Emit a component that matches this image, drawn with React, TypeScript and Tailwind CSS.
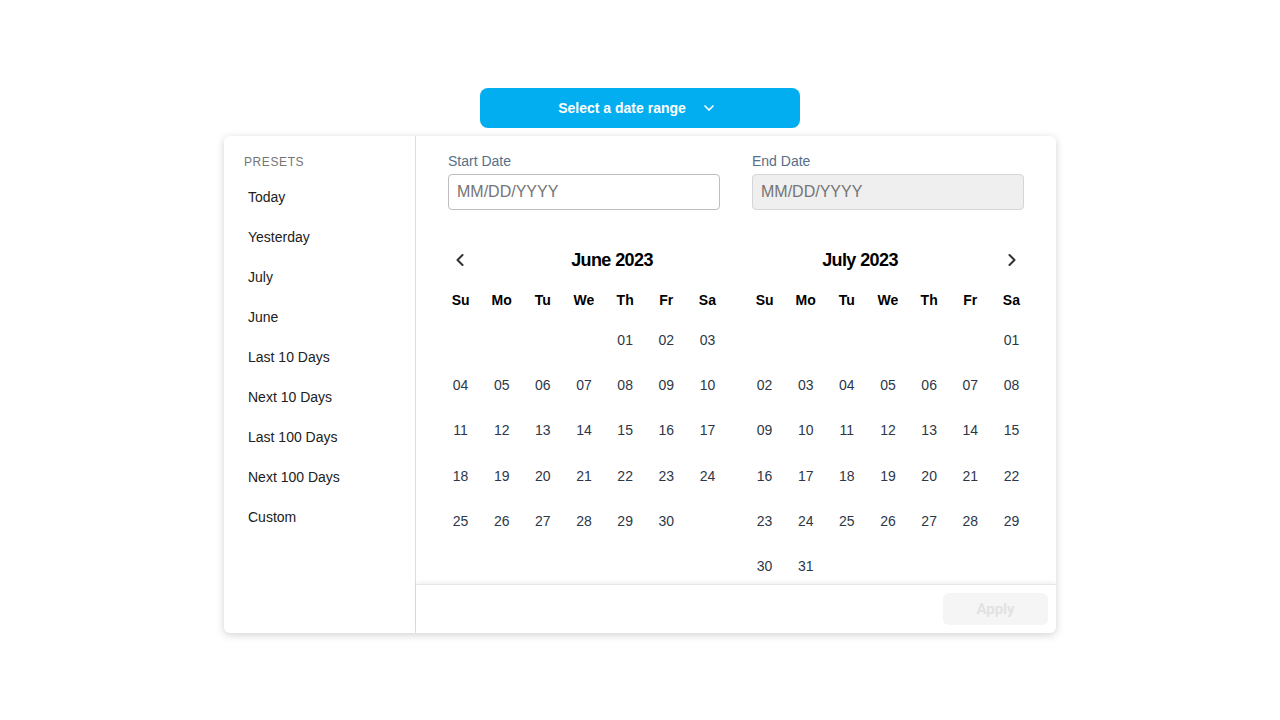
import { ChevronDown, ChevronLeft, ChevronRight } from 'lucide-react';

const presets = [
  'Today',
  'Yesterday',
  'July',
  'June',
  'Last 10 Days',
  'Next 10 Days',
  'Last 100 Days',
  'Next 100 Days',
  'Custom',
];

const dayNames = ['Su', 'Mo', 'Tu', 'We', 'Th', 'Fr', 'Sa'];

const buildWeeks = (offset: number, days: number) => {
  const cells: (number | null)[] = [];
  for (let i = 0; i < offset; i++) cells.push(null);
  for (let d = 1; d <= days; d++) cells.push(d);
  while (cells.length % 7 !== 0) cells.push(null);
  const weeks: (number | null)[][] = [];
  for (let i = 0; i < cells.length; i += 7) weeks.push(cells.slice(i, i + 7));
  return weeks;
};

const Month = ({
  title,
  offset,
  days,
  side,
}: {
  title: string;
  offset: number;
  days: number;
  side: 'left' | 'right';
}) => {
  const weeks = buildWeeks(offset, days);
  return (
    <div className="w-[288px]">
      <div className="flex h-10 items-center">
        {side === 'left' && (
          <button className="flex h-10 w-10 items-center justify-center text-[#333]">
            <ChevronLeft className="h-5 w-5" strokeWidth={2.5} />
          </button>
        )}
        <div
          className={
            side === 'left'
              ? 'flex-1 pl-4 text-center text-[18px] font-bold tracking-[-0.6px] text-black'
              : 'flex-1 pr-4 text-center text-[18px] font-bold tracking-[-0.6px] text-black'
          }
        >
          {title}
        </div>
        {side === 'right' && (
          <button className="flex h-10 w-10 items-center justify-center text-[#333]">
            <ChevronRight className="h-5 w-5" strokeWidth={2.5} />
          </button>
        )}
      </div>
      <div className="grid h-[38px] grid-cols-7 items-center pt-[2px]">
        {dayNames.map((d) => (
          <div key={d} className="text-center text-[14px] font-bold text-black">
            {d}
          </div>
        ))}
      </div>
      {weeks.map((week, wi) => (
        <div key={wi} className="grid h-[45.2px] grid-cols-7 items-center">
          {week.map((day, di) => (
            <div key={di} className="text-center text-[14px] text-[#2d3748]">
              {day ? String(day).padStart(2, '0') : ''}
            </div>
          ))}
        </div>
      ))}
    </div>
  );
};

export default function App() {
  return (
    <div className="min-h-screen bg-white font-['Liberation_Sans',Arial,sans-serif]">
      <div className="flex flex-col items-center pt-[88px]">
        <button className="flex h-10 w-[320px] items-center justify-center gap-[15px] rounded-lg bg-[#03aef0] pr-[5px] text-[14px] font-bold text-white">
          <span>Select a date range</span>
          <ChevronDown className="h-4 w-4" strokeWidth={2.5} />
        </button>

        <div className="mt-2 flex h-[497px] w-[832px] overflow-hidden rounded-md bg-white shadow-[0_2px_8px_rgba(0,0,0,0.18)]">
          {/* Presets */}
          <div className="w-[192px] shrink-0 border-r border-[#dddddd] pt-[17px]">
            <div className="px-5 text-[12px] tracking-[0.6px] text-[#757575]">PRESETS</div>
            <div className="mt-[6px] flex flex-col">
              {presets.map((p) => (
                <div key={p} className="flex h-10 items-center px-6 text-[14px] text-[#212121]">
                  {p}
                </div>
              ))}
            </div>
          </div>

          {/* Main */}
          <div className="flex flex-1 flex-col">
            <div className="h-[448px] overflow-hidden px-8 pt-4">
              <div className="flex gap-8">
                <div className="w-[272px]">
                  <div className="text-[14px] leading-[18px] text-[#56708a]">Start Date</div>
                  <input
                    placeholder="MM/DD/YYYY"
                    className="mt-1 h-9 w-full rounded border border-[#bdbdbd] bg-white px-2 text-[16px] text-[#212121] outline-none placeholder:text-[#757575]"
                  />
                </div>
                <div className="w-[272px]">
                  <div className="text-[14px] leading-[18px] text-[#56708a]">End Date</div>
                  <input
                    placeholder="MM/DD/YYYY"
                    disabled
                    className="mt-1 h-9 w-full rounded border border-[#d6d6d6] bg-[#efefef] px-2 text-[16px] outline-none placeholder:text-[#757575]"
                  />
                </div>
              </div>
              <div className="-mx-2 mt-[30px] flex gap-4">
                <Month title="June 2023" offset={4} days={30} side="left" />
                <Month title="July 2023" offset={6} days={31} side="right" />
              </div>
            </div>
            <div className="flex h-[49px] items-center justify-end border-t border-[#e6e6e6] px-2 shadow-[0_-2px_4px_rgba(0,0,0,0.06)]">
              <button className="h-8 w-[105px] rounded-md bg-[#f5f5f5] font-['Roboto',sans-serif] text-[15px] font-bold text-[#e2e2e2]">
                Apply
              </button>
            </div>
          </div>
        </div>
      </div>
    </div>
  );
}
